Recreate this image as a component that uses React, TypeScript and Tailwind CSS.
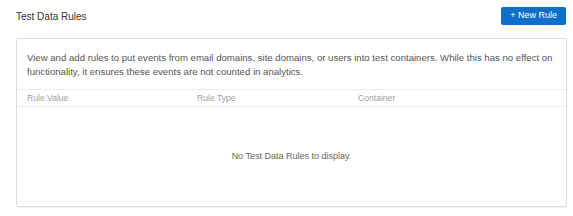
export default function App() {
  const columns = ['Rule Value', 'Rule Type', 'Container'];

  return (
    <div className="h-[216px] w-[573px] bg-white font-['Liberation_Sans',Arial,sans-serif]">
      {/* Header */}
      <div className="flex items-center justify-between pl-4 pr-[7px] pt-[7px]">
        <h2 className="text-[10px] text-[#333]">Test Data Rules</h2>
        <button className="h-[18px] rounded-[2px] bg-[#0e6fc9] px-[9px] text-[9px] text-white">
          + New Rule
        </button>
      </div>

      {/* Card */}
      <div className="mx-4 mr-[6px] mt-[13px] flex h-[169px] flex-col rounded-[2px] border border-[#dcdcdc] shadow-[0_1px_1px_rgba(0,0,0,0.06)]">
        <p className="px-[10px] pt-[12px] pb-[10px] text-[9.6px] leading-[14px] text-[#555]">
          View and add rules to put events from email domains, site domains, or users into test
          containers. While this has no effect on functionality, it ensures these events are not
          counted in analytics.
        </p>

        <div className="flex h-[18px] items-center border-y border-[#ececec] px-[10px] text-[8.6px] text-[#a0a0a0]">
          <div className="w-[170px]">{columns[0]}</div>
          <div className="w-[161px]">{columns[1]}</div>
          <div>{columns[2]}</div>
        </div>

        <div className="flex flex-1 items-center justify-center text-[9px] text-[#666]">
          No Test Data Rules to display.
        </div>
      </div>
    </div>
  );
}
